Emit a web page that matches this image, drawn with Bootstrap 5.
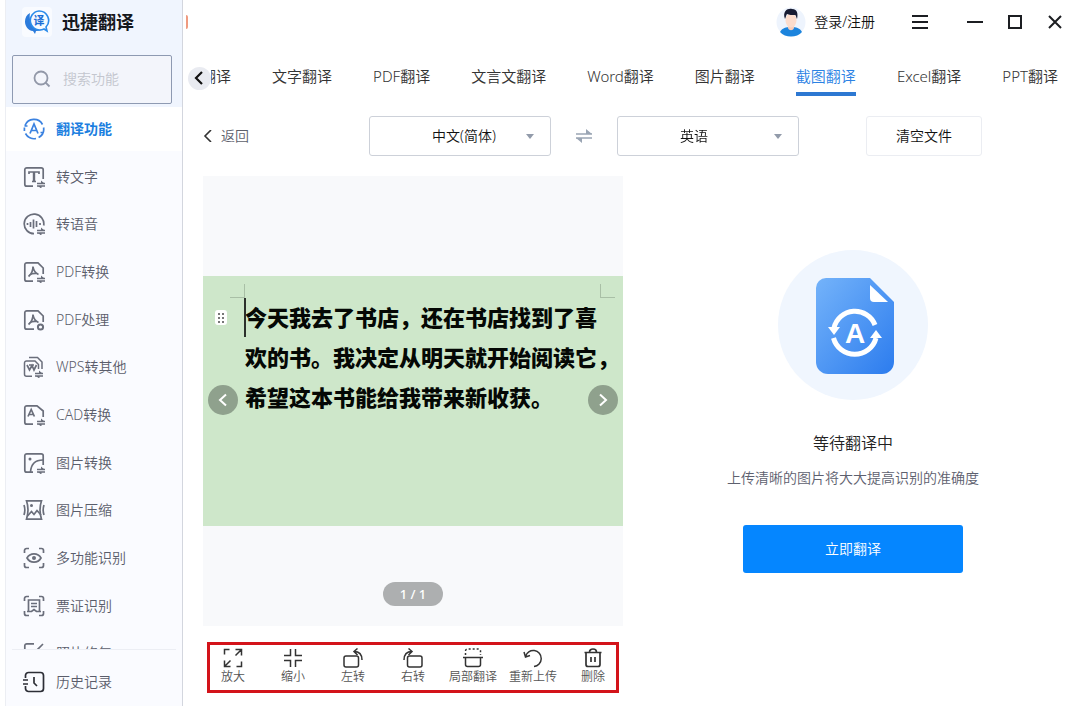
<!DOCTYPE html>
<html lang="zh-CN">
<head>
<meta charset="utf-8">
<meta name="viewport" content="width=device-width, initial-scale=1">
<title>迅捷翻译</title>
<link href="https://cdn.jsdelivr.net/npm/bootstrap@5.3.0/dist/css/bootstrap.min.css" rel="stylesheet">
<style>
  body { font-family: "Noto Sans", "Noto Sans CJK SC", sans-serif; font-size: 14px; font-weight: 350; line-height: 20px; color: #222; background: #fff; }
  svg { display: block; fill: none; stroke: currentColor; }
  a { color: inherit; text-decoration: none; }
  button, input, select { font-weight: inherit; }
  .app { min-height: 100vh; }
  /* sidebar */
  .side { flex: 0 0 178px; height: 100vh; position: sticky; top: 0; margin-left: 5px; background: #fafbff; border-left: 1px solid #eceef3; border-right: 1px solid #d3d6de; }
  .side-top { background: #f0f5fe; padding: 0 10px 3px 6px; }
  .brand { height: 44px; padding-left: 10px; gap: 10px; font-size: 18px; font-weight: 700; color: #15171c; margin-bottom: 11px; }
  .brand-logo { width: 30px; height: 30px; background: #f9fbff; border-radius: 4px; }
  .search { height: 49px; background: #f3f5fb; border: 1px solid #8e9ab2; border-radius: 2px; padding: 0 0 2px 20px; gap: 12px; color: #9298a8; }
  .search svg { flex: none; }
  .search input { width: 100%; min-width: 0; border: 0; background: none; outline: 0; padding: 0; font-size: 14px; }
  .search input::placeholder { color: #c3c6ce; opacity: 1; }
  .side-list { min-height: 0; overflow: hidden; }
  .side-list li { margin-bottom: 4px; }
  .side-list li:nth-child(3n+2) { margin-bottom: 3px; }
  .side-link { display: flex; align-items: center; gap: 11px; height: 44px; padding-left: 17px; color: #5a5d6b; }
  .side-link svg { width: 22px; height: 22px; stroke-width: 1.7; color: #6a6e7b; }
  .side-link.active { background: #fff; color: #1c7fe0; font-weight: 700; }
  .side-link.active svg { color: #3b82e0; }
  .side-foot { height: 57px; margin: 0 6px; border-top: 1px solid #eceef4; }
  .side-foot .side-link { height: 64px; padding-left: 11px; }
  .side-foot svg { color: #2c2e36; }
  /* window header */
  .main-pane { min-width: 0; }
  .titlebar { height: 44px; }
  .accent-edge { width: 2px; height: 14px; margin-left: 3px; background: #ef9a80; border-radius: 0 2px 2px 0; }
  .login { gap: 8px; color: #111; }
  .winbtn { width: 32px; height: 30px; margin-left: 8px; border: 0; background: none; padding: 0; display: grid; place-items: center; color: #1c1e22; }
  .winbtn.menu { margin-left: 29px; margin-right: 15px; }
  /* category tabs */
  .tabbar { height: 52px; padding: 0 13px 0 5px; }
  .round { width: 23px; height: 23px; border: 0; border-radius: 50%; background: #e9ebf1; padding: 0 2px 0 0; display: grid; place-items: center; flex: none; color: #111; }
  .tabs { overflow: hidden; gap: 41px; font-size: 15px; color: #333; height: 52px; min-width: 0; }
  .tabs a { flex: none; white-space: nowrap; line-height: 24px; padding: 20px 0 4px; border-bottom: 4px solid transparent; }
  .tabs a.active { color: #2b82e4; border-color: #2d78d2; }
  /* language row */
  .langrow { height: 40px; margin: 20px 0; padding-left: 20px; }
  .back { width: 166px; gap: 8px; color: #5d606b; }
  .lang { position: relative; width: 182px; }
  .lang select { width: 100%; height: 40px; border: 1px solid #cdd1d9; border-radius: 3px; background: #fff; appearance: none; padding: 0 30px 0 62px; color: #111; font-size: 14px; }
  .lang svg { position: absolute; right: 17px; top: 18px; pointer-events: none; }
  .swap { width: 66px; border: 0; background: none; display: grid; place-items: center; padding: 0; color: #9aa5b4; }
  .clearbtn { width: 116px; height: 40px; margin-left: 67px; border: 1px solid #ebedf2; border-radius: 3px; background: #fff; color: #111; }
  /* work area */
  .work { display: grid; grid-template-columns: minmax(0, 420fr) minmax(0, 448fr); padding-left: 20px; }
  .preview { position: relative; height: 450px; background: #f8f9fb; display: flex; align-items: center; }
  .page-img { position: relative; width: 100%; height: 250px; background: #cee7ca; padding: 20px 0 0 42px; overflow: hidden; }
  .page-img p { margin: 0; font-family: "Noto Sans CJK SC", sans-serif; font-weight: 900; font-size: 22px; line-height: 40px; color: #050805; white-space: nowrap; }
  .mark-l, .mark-r, .caret, .grip { position: absolute; }
  .mark-l { left: 27px; top: 8px; width: 15px; height: 14px; border: solid #a9bfa6; border-width: 0 1px 1px 0; }
  .mark-r { right: 8px; top: 8px; width: 15px; height: 14px; border: solid #a9bfa6; border-width: 0 0 1px 1px; }
  .caret { left: 41px; top: 22px; width: 2px; height: 39px; background: #2c302c; }
  .grip { left: 12px; top: 34px; }
  .pg { position: absolute; top: 50%; margin-top: -16px; width: 30px; height: 30px; border: 0; border-radius: 50%; background: #8fa18d; color: #fff; display: grid; place-items: center; padding: 0; }
  .pg.prev { left: 5px; } .pg.next { right: 5px; }
  .count { position: absolute; left: 50%; bottom: 20px; width: 60px; height: 24px; margin-left: -30px; border-radius: 12px; background: #adafb0; color: #fff; line-height: 24px; text-align: center; font-size: 13px; font-weight: 500; }
  .tools { margin: 16px 4px 13px; height: 51px; border: 3px solid #d3131a; }
  .tools button { flex: 1 0 60px; border: 0; background: none; padding: 3px 0 0; display: flex; flex-direction: column; align-items: center; font-size: 12px; line-height: 18px; color: #555; }
  .tools svg { width: 20px; height: 20px; color: #333; stroke-width: 1.5; }
  .status { padding: 74px 0 0 12px; text-align: center; }
  .status h1 { font-size: 16px; line-height: 24px; font-weight: inherit; margin: 31px 0 0; color: #222; }
  .status p { margin: 13px 0 0; color: #5d606e; }
  .go { width: 220px; height: 48px; margin-top: 37px; border: 0; border-radius: 3px; background: #0586ff; color: #fff; }
</style>
</head>
<body>
<svg width="0" height="0" class="position-absolute" aria-hidden="true">
  <defs>
    <g id="swapmini"><path d="M14 17.500h8M14 20h8"/><path d="M18 14.500v3h3.500zM18.500 22.800V20H15z" fill="currentColor" stroke="none"/></g>
    <g id="corners"><path d="M1.500 6V3.500a2 2 0 0 1 2-2H6M16 1.500h2.500a2 2 0 0 1 2 2V6M20.500 16v2.500a2 2 0 0 1-2 2H16M6 20.500H3.500a2 2 0 0 1-2-2V16"/></g>
  </defs>
</svg>
<div class="app d-flex">
  <aside class="side d-flex flex-column">
    <div class="side-top">
      <div class="brand d-flex align-items-center">
        <span class="brand-logo d-grid"><svg class="m-auto" width="28" height="28" viewBox="0 0 28 28" stroke="none">
          <path d="M7 5C-1 9 1 22 10 23l2 3 1-3c4 0 6-1 8-4-8 2-16-3-14-14z" fill="#2b7bdc" stroke="none"/>
          <path d="M16 3a9.500 9.500 0 1 0 5 18l3 2-1-4A9.500 9.500 0 0 0 16 3z" fill="#f5faff" stroke="#2a8bea" stroke-width="1.600"/>
          <text x="10.500" y="16.500" font-size="11" font-weight="700" fill="#1b6fd6" stroke="none">译</text></svg></span>
        <span>迅捷翻译</span>
      </div>
      <label class="search d-flex align-items-center">
        <svg width="18" height="18" viewBox="0 0 18 18" stroke-width="1.800"><circle cx="8" cy="8" r="6.500"/><path d="M12.500 12.500l4 4"/></svg>
        <input type="search" placeholder="搜索功能" aria-label="搜索功能">
      </label>
    </div>
    <ul class="side-list list-unstyled mb-0 flex-grow-1">
      <li><a href="#" class="side-link active"><svg viewBox="0 0 22 22"><path d="M2 7.500A9.700 9.700 0 0 1 19.500 6.500M20.600 9.500a9.700 9.700 0 0 1-5 10M13 20.500A9.700 9.700 0 0 1 2.500 15.500M1.400 13V9.500M1.500 8l3 0M20.500 14.500l-3 0"/><path d="M7 15.500l4-9.500 4 9.500M8.500 12.500h5"/></svg>翻译功能</a></li>
      <li><a href="#" class="side-link"><svg viewBox="0 0 22 22"><path d="M10 20.200H3.800a2 2 0 0 1-2-2V3.800a2 2 0 0 1 2-2h14.400a2 2 0 0 1 2 2V13"/><path d="M6 8V6h10v2M9 15.500h4"/><path d="M11 6v9" stroke-width="2.400"/><use href="#swapmini"/></svg>转文字</a></li>
      <li><a href="#" class="side-link"><svg viewBox="0 0 22 22"><path d="M11 20.700A9.800 9.800 0 1 1 20.700 12.500"/><path d="M4.500 10v2M7.500 9v5M10.500 6.500v9M13.500 8v6M17 10v2"/><use href="#swapmini"/></svg>转语音</a></li>
      <li><a href="#" class="side-link"><svg viewBox="0 0 22 22"><path d="M10 20.200H3.800a2 2 0 0 1-2-2V3.800a2 2 0 0 1 2-2H15l5.200 5.200V13"/><path d="M10 5.500c.5 4 2.500 6.500 5.500 8M10 5.500C10 9 8.500 13 5.500 15.500M6.500 14c2-1.500 4-2 8-1.500"/><use href="#swapmini"/></svg>PDF转换</a></li>
      <li><a href="#" class="side-link"><svg viewBox="0 0 22 22"><path d="M11 20.200H3.800a2 2 0 0 1-2-2V3.800a2 2 0 0 1 2-2H15l5.200 5.200V13"/><path d="M10 5.500c.5 4 2.500 6.500 5.500 8M10 5.500C10 9 8.500 13 5.500 15.500M6.500 14c2-1.500 4-2 7-1.500"/><circle cx="17.500" cy="18" r="2.600" stroke-width="2"/></svg>PDF处理</a></li>
      <li><a href="#" class="side-link"><svg viewBox="0 0 22 22"><path d="M9 20.200H3.500a2 2 0 0 1-2-2V7a2 2 0 0 1 2-2h8.500l3.500 3.500V13M6 1.500h8.500l4.500 4.500V13" stroke-width="1.500"/><path d="M4 9l2.500 5L9 9.500l2 4.500 2.500-5M6 9h5"/><use href="#swapmini" x="-2"/></svg>WPS转其他</a></li>
      <li><a href="#" class="side-link"><svg viewBox="0 0 22 22"><path d="M10 20.200H3.800a2 2 0 0 1-2-2V3.800a2 2 0 0 1 2-2H14l6.200 5.200V13"/><path d="M5 12.500l3.200-7 3.200 7M6.200 10.500h4"/><use href="#swapmini"/></svg>CAD转换</a></li>
      <li><a href="#" class="side-link"><svg viewBox="0 0 22 22"><path d="M10 20.200H3.800a2 2 0 0 1-2-2V3.800a2 2 0 0 1 2-2h14.400a2 2 0 0 1 2 2V13"/><path d="M7.500 20C8 12 12 8 20 8"/><circle cx="7" cy="7" r="1.500" fill="currentColor" stroke="none"/><use href="#swapmini"/></svg>图片转换</a></li>
      <li><a href="#" class="side-link"><svg viewBox="0 0 22 22"><path d="M3.500 1.800h15c-2 6-2 12 0 18.400h-15c2-6.400 2-12.400 0-18.400zM1 6c1 3 1 7 0 10M21 6c-1 3-1 7 0 10"/><path d="M4.500 17l4-4.500 2.500 3 3-4 4 4.500"/><circle cx="8.500" cy="6.500" r="1.500" fill="currentColor" stroke="none"/></svg>图片压缩</a></li>
      <li><a href="#" class="side-link"><svg viewBox="0 0 22 22"><use href="#corners"/><path d="M4 11c3-5.500 11-5.500 14 0-3 5.500-11 5.500-14 0z"/><circle cx="11" cy="11" r="2" fill="currentColor" stroke="none"/></svg>多功能识别</a></li>
      <li><a href="#" class="side-link"><svg viewBox="0 0 22 22"><use href="#corners"/><path d="M5.500 16.500V5h11v11.500h-3l-2.500-2-2.500 2zM4 16.500h4M14 16.500h4M8 8.500h6M8 11.500h6"/></svg>票证识别</a></li>
      <li><a href="#" class="side-link"><svg viewBox="0 0 22 22"><path d="M11 1.800H3.800a2 2 0 0 0-2 2v14.400a2 2 0 0 0 2 2h14.400a2 2 0 0 0 2-2V11M20 2l-9 9"/></svg>照片修复</a></li>
    </ul>
    <div class="side-foot"><a href="#" class="side-link"><svg viewBox="0 0 22 22"><path d="M2.500 7V4.500a3 3 0 0 1 3-3h12a3 3 0 0 1 3 3v13a3 3 0 0 1-3 3h-12a3 3 0 0 1-3-3V15M0 9h5M0 13h5M11 6v6l3 3"/></svg>历史记录</a></div>
  </aside>

  <main class="main-pane flex-grow-1">
    <header class="titlebar d-flex align-items-center">
      <span class="accent-edge"></span>
      <a href="#" class="login d-flex align-items-center ms-auto">
        <svg width="30" height="30" viewBox="0 0 30 30" stroke="none"><circle cx="15" cy="15" r="14.500" fill="#eef4fd" stroke="none"/>
          <path d="M4 25c2-4 6-5 11-5s9 1 11 5c-5 6-17 6-22 0z" fill="#1c84dd" stroke="none"/><path d="M12 17h6v4c-1 3-5 3-6 0z" fill="#f6cdbb" stroke="none"/><ellipse cx="15" cy="13.500" rx="5.500" ry="7" fill="#fcdccc" stroke="none"/><path d="M9 12C6 4 12 1 16 2c6 0 6 6 5 10-1-2-1-4-2-4-3 0-6 0-8-1-1 1-1 3-2 5z" fill="#161b33" stroke="none"/></svg>
        <span>登录/注册</span></a>
      <button class="winbtn menu" aria-label="菜单"><svg width="16" height="16" viewBox="0 0 16 16" stroke-width="2"><path d="M0 2h16M0 8h16M0 14h16"/></svg></button>
      <button class="winbtn" aria-label="最小化"><svg width="16" height="16" viewBox="0 0 16 16" stroke-width="2"><path d="M0 8h16"/></svg></button>
      <button class="winbtn" aria-label="最大化"><svg width="16" height="16" viewBox="0 0 16 16" stroke-width="2"><path d="M2 2h12v12H2z"/></svg></button>
      <button class="winbtn" aria-label="关闭"><svg width="16" height="16" viewBox="0 0 16 16" stroke-width="2"><path d="M2 2l12 12M14 2L2 14"/></svg></button>
    </header>

    <div class="tabbar d-flex">
      <button class="round align-self-center mt-3" aria-label="向左"><svg width="12" height="14" viewBox="0 0 12 14" stroke-width="2.200"><path d="M9 1L3 7l6 6"/></svg></button>
      <nav class="tabs d-flex justify-content-end flex-grow-1">
        <a href="#">翻译</a><a href="#">文字翻译</a><a href="#">PDF翻译</a><a href="#">文言文翻译</a><a href="#">Word翻译</a><a href="#">图片翻译</a><a href="#" class="active">截图翻译</a><a href="#">Excel翻译</a><a href="#">PPT翻译</a>
      </nav>
    </div>

    <div class="langrow d-flex align-items-center">
      <a href="#" class="back d-flex align-items-center"><svg width="10" height="12" viewBox="0 0 10 12" stroke-width="1.600" color="#333"><path d="M8 0L2 6l6 6"/></svg>返回</a>
      <div class="lang"><select aria-label="源语言"><option>中文(简体)</option><option>英语</option></select><svg width="8" height="5" viewBox="0 0 8 5"><path d="M0 0h8L4 5z" fill="#929baa" stroke="none"/></svg></div>
      <button class="swap" aria-label="交换语言"><svg width="18" height="14" viewBox="0 0 18 14" stroke-width="1.600"><path d="M1 5h16M1 9h16"/><path d="M11 0v5h6zM7 14V9H1z" fill="currentColor" stroke="none"/></svg></button>
      <div class="lang"><select aria-label="目标语言"><option>英语</option><option>中文(简体)</option></select><svg width="8" height="5" viewBox="0 0 8 5"><path d="M0 0h8L4 5z" fill="#929baa" stroke="none"/></svg></div>
      <button class="clearbtn">清空文件</button>
    </div>

    <div class="work">
      <section>
        <div class="preview">
          <div class="page-img">
            <span class="mark-l"></span><span class="mark-r"></span><span class="caret"></span>
            <svg class="grip" width="12" height="15" viewBox="0 0 12 15"><rect width="12" height="15" rx="3" fill="#fff" stroke="none"/><g fill="#777" stroke="none"><path d="M3 3h2v2H3zM7 3h2v2H7zM3 7h2v2H3zM7 7h2v2H7zM3 11h2v2H3zM7 11h2v2H7z"/></g></svg>
            <p>今天我去了书店，还在书店找到了喜<br>欢的书。我决定从明天就开始阅读它，<br>希望这本书能给我带来新收获。</p>
          </div>
          <button class="pg prev" aria-label="上一张"><svg width="12" height="14" viewBox="0 0 12 14" stroke-width="2"><path d="M9 1.500L3 7l6 5.500"/></svg></button>
          <button class="pg next" aria-label="下一张"><svg width="12" height="14" viewBox="0 0 12 14" stroke-width="2"><path d="M3 1.500L9 7l-6 5.500"/></svg></button>
          <span class="count">1 / 1</span>
        </div>
        <div class="tools d-flex justify-content-center">
          <button><svg viewBox="0 0 20 20"><path d="M1.500 6.500v-5h5M18.500 13.500v5h-5M12.500 1.500h6v6M18.500 1.500l-6 6M7.500 18.500h-6v-6M1.500 18.500l6-6"/></svg>放大</button>
          <button><svg viewBox="0 0 20 20"><path d="M7.500 1v6.500H1M12.500 1v6.500H19M7.500 19v-6.500H1M12.500 19v-6.500H19"/></svg>缩小</button>
          <button><svg viewBox="0 0 20 20"><rect x="1" y="8" width="14.500" height="11" rx="2"/><path d="M11 3.500c5 0 8 3 8 8.500M14.500.5l-3.500 3 3.500 3.500"/></svg>左转</button>
          <button><svg viewBox="0 0 20 20"><rect x="4.500" y="8" width="14.500" height="11" rx="2"/><path d="M9 3.500c-5 0-8 3-8 8.500M5.500.5l3.500 3-3.500 3.500"/></svg>右转</button>
          <button><svg viewBox="0 0 20 20"><path d="M0 9.500h20M2.500 9.500v7a2 2 0 0 0 2 2h11a2 2 0 0 0 2-2v-7"/><path d="M2.500 7V3a2 2 0 0 1 2-2h11a2 2 0 0 1 2 2v4" stroke-dasharray="2 2"/></svg>局部翻译</button>
          <button><svg viewBox="0 0 20 20"><path d="M2.500 8.500A8 8 0 1 1 11 18.500M1 4l1.500 5L7 7.500"/></svg>重新上传</button>
          <button><svg viewBox="0 0 20 20" color="#111"><path d="M1.500 4.500h17M3 4.500v12a2 2 0 0 0 2 2h10a2 2 0 0 0 2-2v-12M6.500 4c0-4 7-4 7 0M8 9v5M12 9v5" stroke-width="1.700"/></svg>删除</button>
        </div>
      </section>
      <section class="status">
        <svg class="mx-auto" width="150" height="150" viewBox="0 0 150 150" aria-hidden="true">
          <defs><linearGradient id="doc" x1="0" y1="0" x2="1" y2="1"><stop offset="0" stop-color="#74b3fa"/><stop offset="1" stop-color="#2c7cee"/></linearGradient></defs>
          <circle cx="75" cy="75" r="75" fill="#f0f6fe" stroke="none"/>
          <path d="M48 28h44l24 24v60a12 12 0 0 1-12 12H50a12 12 0 0 1-12-12V38a10 10 0 0 1 10-10z" fill="url(#doc)" stroke="none"/>
          <path d="M92 35v13a4 4 0 0 0 4 4h14z" fill="#fff" stroke="none"/>
          <g stroke="#fff" stroke-width="5"><path d="M56 78a21.500 21.500 0 0 1 41-3M98 88a22 22 0 0 1-42.500 0"/></g>
          <path d="M50 77h12l-6 8zM92 88l6-8 6 8z" fill="#fff" stroke="none"/>
          <text x="77" y="93" text-anchor="middle" font-family="Liberation Sans, sans-serif" font-weight="700" font-size="28" fill="#fff" stroke="none">A</text>
        </svg>
        <h1>等待翻译中</h1>
        <p>上传清晰的图片将大大提高识别的准确度</p>
        <button class="go">立即翻译</button>
      </section>
    </div>
  </main>
</div>
<script src="https://cdn.jsdelivr.net/npm/bootstrap@5.3.0/dist/js/bootstrap.bundle.min.js"></script>
</body>
</html>
